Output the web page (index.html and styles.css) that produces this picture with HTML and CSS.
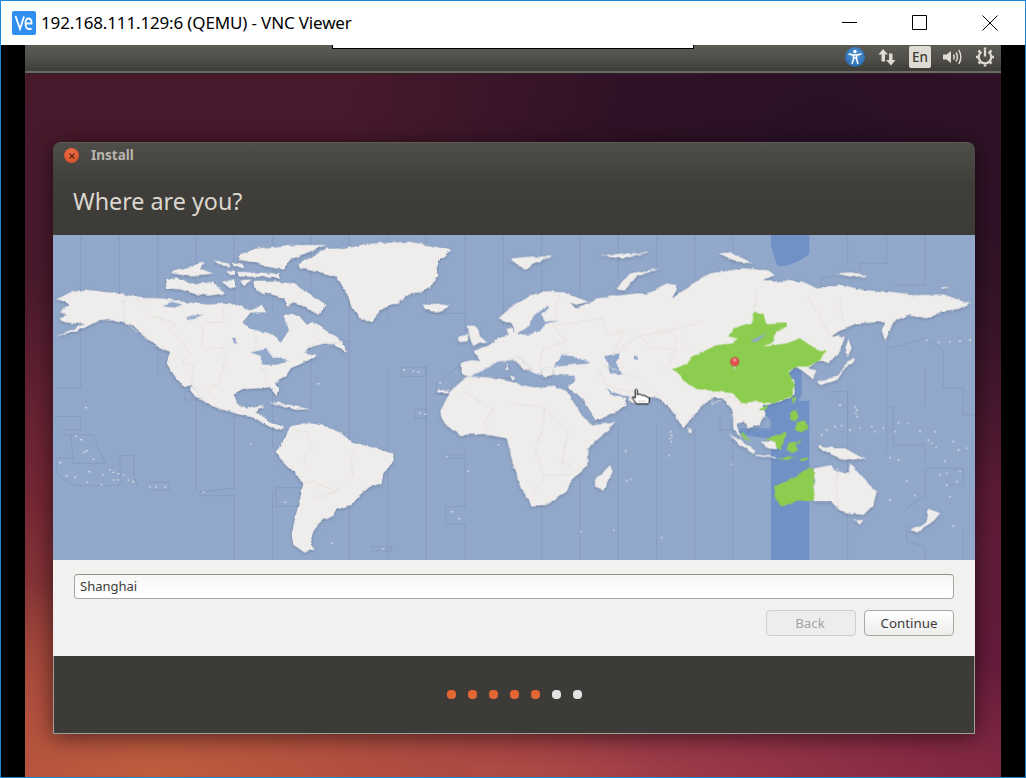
FILE: index.html
```html
<!DOCTYPE html>
<html lang="en">
<head>
<meta charset="utf-8">
<title>VNC Viewer</title>
<link rel="stylesheet" href="styles.css">
</head>
<body>
<div class="frame">
  <header class="titlebar">
    <svg class="vnc-logo" viewBox="0 0 24 24"><rect class="vnc-bg" width="24" height="24" rx="2"/><path class="vnc-mark" d="M3.500 5l4.500 13L12 5.500M13.500 12.500h6v-1q0-4-3-4t-3 5q0 5.500 3.500 5.500h2.500"/></svg>
    <span class="title-text">192.168.111.129:6 (QEMU) - VNC Viewer</span>
    <div class="win-controls">
      <svg class="win-btn" viewBox="0 0 16 16"><path class="win-stroke" d="M0 7.500h15"/></svg>
      <svg class="win-btn" viewBox="0 0 16 16"><path class="win-stroke" d="M.5.500h14v14h-14z"/></svg>
      <svg class="win-btn" viewBox="0 0 16 16"><path class="win-stroke" d="M.5.500l15 15M15.500.500l-15 15"/></svg>
    </div>
  </header>
  <div class="vnc-body">
    <div class="strip"></div>
    <main class="desktop">
      <div class="vnc-tab"></div>
      <div class="panel">
        <svg class="ico ico-a11y" viewBox="0 0 22 22">
          <defs><radialGradient id="a11y" cx=".5" cy=".4" r=".7"><stop offset="0" stop-color="#5b9bd8"/><stop offset="1" stop-color="#1f62a8"/></radialGradient></defs>
          <circle cx="11" cy="11" r="10" fill="url(#a11y)"/>
          <circle class="a-white" cx="11" cy="5.500" r="1.700"/>
          <path class="a-line" d="M4.500 8l4.500 1h4l4.500-1M9.500 9v4l-1.500 5M12.500 9v4l1.500 5M9.500 12h3"/>
        </svg>
        <svg class="ico ico-arrows" viewBox="0 0 18 18"><path class="p-fill" d="M5 1l5 5.500H7v7H3.500v-7H.5zM13 17.500l-5-5.500h3V5.500h3.500V12h3z"/></svg>
        <span class="en">En</span>
        <svg class="ico ico-vol" viewBox="0 0 22 18"><path class="p-fill" d="M1 6.500h3.500L9 3v12l-4.500-3.500H1z"/><path class="p-line" d="M11.500 6.500q1.500 2.500 0 5M14 4.500q2.800 4.500 0 9M16.800 2q4 7 0 14"/></svg>
        <svg class="ico ico-gear" viewBox="0 0 20 20"><path class="p-thick" d="M6.500 4.800a6.300 6.300 0 1 0 7 0M10 2.500v7"/><path class="p-line2" d="M10 .5v2M10 17.500v2M1 10H3M17 10h2M3.500 3.500l1.500 1.500M16.500 3.500L15 5M3.500 16.500L5 15M16.500 16.500L15 15"/></svg>
      </div>
      <section class="workspace">
        <div class="window">
          <div class="window-head">
            <div class="window-title">
              <span class="close"><svg class="close-x" viewBox="0 0 8 8"><path d="M1.500 1.500l5 5M6.500 1.500l-5 5"/></svg></span>
              <span class="install">Install</span>
            </div>
            <h1 class="heading">Where are you?</h1>
          </div>
          <svg class="map" viewBox="9 0 2766 975" aria-label="World time zone map">
            <defs>
              <filter id="coast" x="-5%" y="-5%" width="110%" height="110%" color-interpolation-filters="sRGB">
                <feTurbulence type="fractalNoise" baseFrequency=".04" numOctaves="3" seed="4" result="n"/>
                <feDisplacementMap in="SourceGraphic" in2="n" scale="11" xChannelSelector="R" yChannelSelector="G" result="d"/>
                <feGaussianBlur in="d" stdDeviation="1.800" result="b"/>
                <feGaussianBlur in="d" stdDeviation="5"/>
                <feOffset dy="3" dx="1" result="sb"/>
                <feFlood flood-color="#4a5a78" flood-opacity=".5"/>
                <feComposite in2="sb" operator="in" result="s"/>
                <feMerge><feMergeNode in="s"/><feMergeNode in="b"/></feMerge>
              </filter>
              <filter id="rough" x="-5%" y="-5%" width="110%" height="110%" color-interpolation-filters="sRGB">
                <feTurbulence type="fractalNoise" baseFrequency=".04" numOctaves="3" seed="4" result="n"/>
                <feDisplacementMap in="SourceGraphic" in2="n" scale="11" xChannelSelector="R" yChannelSelector="G"/>
                <feGaussianBlur stdDeviation="1.800"/>
              </filter>
              <filter id="soft"><feGaussianBlur stdDeviation="1.200"/></filter>
            </defs>
            <rect class="sea" x="0" y="0" width="2800" height="975"/>
            <g transform="translate(1380 0)">
              <path class="band" d="M783 0H898V58Q870 80 830 92H802Q790 60 783 30ZM835 400H875V480L865 497H898V975H783V612L700 600 670 590V580H783V560L750 510 790 470Z"/>
            </g>
            <path class="tz" d="M92 0V460H10M208 0V260M323 0V420M438 0V770M552 0V760L450 770V782H552V975M668 0V640M668 770V975M783 0V240M783 380V520M897 0V320H870M897 320V975M1013 0V260M1013 400V975M1128 0V235H1245V0M1128 395V975M1245 235V290M1245 640V660H1190V670H1245V815H1187V868H1245V975M1360 0V270M10 545H92V585H42V600H130L165 685H70L62 600M20 670H60M20 670V720L75 752H210V662H252V725L262 752M297 742H358V765H297M405 470H440V495H405ZM678 758H752V815H678ZM1055 397H1128V425H1055ZM1230 390L1160 445V478H1200M1095 522H1128V550H1095ZM968 935H1025V948H968Z"/>
            <g transform="translate(1380 0)">
              <path class="tz" d="M95 0V175M210 0V175M325 0V130M440 0V100M555 0V130M668 0V100M1013 0V80M1130 0V85H1050V110L935 130V180M1245 0V150H1150M95 640V975M210 640V975M325 560V975M440 570V975M555 580V975M668 600V975M1013 460V975M965 470H1013V600M1130 340L1180 330 1245 310 1300 345V460H1360V540H1395M1130 650V515H1150V630H1245M1245 630V680M1190 870V920L1245 935V975M1360 880V975M1190 820L1245 780V700H1360V750H1315M630 550V585H780V550M1245 400V515M1130 340V515"/>
            </g>
            <g class="land">
              <!-- North America -->
              <path d="M15 305L60 285 105 268 75 266 45 262 28 250 50 240 30 228 62 210 22 192 60 172 105 163 180 172 220 177 262 188 340 190 400 200 470 208 520 206 560 208 600 226 635 212 650 232 600 235 578 262 600 280 640 285 670 298 692 322 715 288 700 268 705 240 745 240 770 268 790 258 825 285 850 300 875 320 895 352 860 335 825 325 770 340 775 352 800 357 790 372 760 380 722 400 710 420 675 445 685 460 680 482 660 460 620 460 575 463 553 480 560 505 590 520 610 515 630 510 620 535 640 545 660 560 690 570 705 575 685 584 650 570 610 548 575 540 520 525 490 515 460 498 440 470 425 450 405 460 375 425 350 385 360 350 330 340 290 310 250 272 210 258 150 255 100 280Z"/>
              <path d="M425 452L445 475 460 497 440 490 420 465Z"/>
              <!-- Greenland, Iceland -->
              <path d="M745 88L790 62 830 40 880 42 950 26 1080 20 1130 30 1205 45 1170 72 1160 100 1162 125 1140 160 1110 172 1080 175 1060 195 1000 220 965 260 930 250 905 215 895 185 875 150 860 125 800 110 750 100Z"/>
              <path d="M1118 210L1160 205 1198 212 1180 228 1155 233 1125 222Z"/>
              <!-- South America -->
              <path d="M680 650L705 610 720 575 750 565 790 565 830 575 870 590 910 622 960 635 1030 655 1030 680 1000 715 995 745 960 755 930 780 905 810 860 820 850 840 815 855 790 890 780 925 795 945 760 950 730 930 725 900 735 850 750 790 760 745 730 710 690 670Z"/>
              <path d="M655 500L700 505 745 515 780 522 740 525 700 515ZM610 515L640 510 640 520Z"/>
              <g transform="translate(300 15)">
                <path d="M265 45L320 25 420 15 530 15 480 35 420 60 400 90 350 80 320 70 270 60ZM385 125L430 130 470 155 530 195 505 225 470 205 440 195 400 175 355 160 320 150 340 125ZM45 120L80 112 120 130 170 128 190 125 225 160 175 168 130 160 90 148 50 145ZM65 95L110 85 145 70 165 68 150 85 190 100 120 110 70 100ZM190 60L240 72 240 80 205 75ZM265 95L390 100 390 112 270 110ZM215 125L250 118 260 140 240 145ZM270 120L305 118 280 140ZM310 125L340 125 345 165 315 150ZM230 90L255 92 255 105 235 105ZM248 68L280 75 285 85 250 78ZM405 175L430 180 415 205Z"/>
              </g>
              <!-- Eurasia west -->
              <g transform="translate(1140 60)">
                <path d="M95 322L125 315 150 318 130 288 175 272 205 250 235 240 225 222 245 218 255 232 245 205 205 190 250 150 300 120 350 108 400 112 475 140 440 150 420 142 440 162 470 158 500 130 540 125 650 115 720 90V300L450 340 435 365 370 360 120 368 95 355Z"/>
              </g>
              <!-- Asia -->
              <g transform="translate(1380 0)">
                <path d="M230 205L300 185 380 175 420 178 440 160 470 145 500 150 490 190 540 150 600 115 700 100 770 105 795 120 760 135 880 140 920 160 1000 150 1060 165 1140 170 1220 180 1300 178 1380 205 1345 222 1300 228 1250 250 1190 240 1150 262 1125 320 1115 285 1125 262 1100 262 1040 265 985 290 965 305 1005 305 990 350 955 385 925 375 895 400 915 405 915 430 905 432 890 415 855 395 830 415 855 445 850 480 810 500 755 510 765 540 745 570 715 580 700 560 680 570 695 610 670 580 668 530 640 490 605 490 570 520 520 580 480 520 445 490 410 485 370 505 345 490 350 510 320 530 258 558 220 495 175 460 180 230Z"/>
              </g>
            </g>
            <!-- inland seas -->
            <g class="water">
              <path d="M578 262L610 232 648 234 700 240 715 285 692 322 670 298 600 280ZM343 210L365 200 398 208 375 218 350 215ZM408 250L440 240 460 238 430 252 412 255ZM542 308L552 308 562 328 550 322ZM600 352L650 342 670 365 716 375 690 388 660 390 635 388 635 362ZM765 350L810 332 860 325 810 352 775 360Z"/>
              <g transform="translate(1140 60)">
                <path d="M120 366L160 345 200 320 250 315 290 345 330 360 360 360 435 362 430 385 370 390 310 395 245 375 240 367ZM375 335L395 300 440 305 480 325 430 330ZM525 300L570 295 560 320 578 358 540 355ZM530 400L570 420 600 428 612 420 590 433 545 420ZM420 405L440 420 500 495 490 497 445 450ZM262 235L295 215 305 190 350 152 356 160 335 178 345 200 385 197 345 210 330 228 300 238 265 240ZM612 303L622 303 622 313 612 313Z"/>
              </g>
              <g transform="translate(1380 0)"><path d="M150 650L158 645 175 625 185 635 165 640 160 670 150 665Z"/></g>
            </g>
            <g class="land">
              <!-- Africa and islands -->
              <g transform="translate(1380 0)">
                <path d="M-210 530L-180 470-130 425-60 428 0 440 70 458 130 452 170 468 215 540 245 572 315 562 270 608 232 640 232 690 190 730 170 770 110 810 65 812 40 770 15 710 0 650-10 610-80 597-150 600-200 565Z"/>
                <path d="M255 735L300 690 308 710 280 765 255 755ZM535 578L550 585 545 592 535 590ZM1015 310L1025 340 1010 370 1005 345ZM920 440L985 420 1010 385 1030 365 1035 375 1005 400 985 430 935 450ZM912 700L960 690 980 710 1015 712 1020 685 1060 730 1100 770 1090 810 1060 840 1020 835 985 825 960 800 912 800ZM1030 855L1060 855 1048 872ZM1200 885L1250 860 1255 820 1290 835 1270 860 1220 890ZM5 70L60 65 130 65 70 85 45 105 20 85ZM320 160L360 115 450 100 380 125 345 165ZM625 55L660 52 730 85 680 80ZM970 115L1030 112 1075 125 1020 125ZM1295 160L1320 158 1300 165ZM270 60L350 55 420 52 340 68Z"/>
              </g>
              <g transform="translate(1140 60)">
                <path d="M110 212L135 212 150 240 172 262 130 270 120 250ZM85 245L115 238 112 260 88 262ZM255 305L275 315 305 340 285 345 255 315ZM228 320L236 345 226 345ZM240 362L258 368 248 378ZM335 340L370 340 370 360 340 365ZM22 405L55 405 55 412 22 412Z"/>
              </g>
              <g transform="translate(2010 435)">
                <path d="M25 160L60 180 105 215 100 222 60 195ZM105 222L170 232 165 236 110 228ZM125 185L175 185 170 208 140 205ZM298 195L345 205 375 205 440 240 405 235 370 240 340 225 300 205Z"/>
              </g>
            </g>
            <path class="dots" d="M108 518h0M78 603h0M93 614h0M110 647h0M103 652h0M131 673h0M30 683h0M118 710h0M50 722h0M75 727h0M112 742h0M155 750h0M160 720h0M180 705h0M190 712h0M205 716h0M222 720h0M235 735h0M250 740h0M190 735h0M205 735h0M300 756h0M318 756h0M345 756h0M461 772h0M602 627h0M705 802h0M845 925h0M1000 942h0M1062 404h0M1090 408h0M1105 412h0M1110 535h0M1125 538h0M1190 666h0M1255 709h0M1207 830h0M1228 851h0M805 446h0M1345 630h0M1165 470h0M1195 465h0M1170 443h0"/>
            <g transform="translate(1380 0)">
              <path class="dots" d="M482 590h0M485 600h0M481 610h0M484 620h0M347 648h0M477 662h0M665 688h0M350 737h0M362 733h0M212 890h0M312 886h0M455 908h0M1035 515h0M1040 525h0M1037 535h0M1042 545h0M990 510h0M935 600h0M950 585h0M975 575h0M995 572h0M1020 585h0M1050 580h0M1085 575h0M1095 590h0M1120 578h0M1155 590h0M1165 563h0M1195 565h0M1230 588h0M1275 590h0M1255 615h0M1265 625h0M1278 637h0M1140 668h0M1165 675h0M1305 678h0M1330 620h0M1345 645h0M1370 640h0M1290 720h0M1310 715h0M1350 710h0M1340 740h0M1310 750h0M1190 738h0M1215 782h0M1320 785h0M1140 795h0M1330 873h0M1250 315h0M1285 322h0M1320 320h0M1350 318h0M1380 315h0"/>
            </g>
            <g class="border">
              <path d="M222 178V260L290 310M255 190L300 240 375 265 360 285 400 320 420 360 395 380 428 392V445L460 470M458 262H520V205M458 262V340H520L530 370 500 450 470 455 495 495M615 285V345M630 395L650 430 648 460M790 300L815 325 880 320M730 590L770 590 785 640 765 670 772 710M790 790L860 770 875 750 910 720 900 660 925 630M760 745L790 740 860 770M1240 470L1330 525 1305 560 1310 590"/>
            </g>
            <g transform="translate(1380 0)">
              <g class="border">
                <path d="M130 270L170 320 100 340 85 400M150 180L130 270 280 250 290 300 340 290 310 360 390 300 480 290 545 360M280 390L390 430 445 480M390 300L420 340 500 340 480 390 450 400M260 400L290 450 390 480M580 260L500 280 430 290M740 170L730 235M895 185L940 265 965 305M990 190L1000 260M0 500L105 520 95 590 75 640 100 720 70 780M105 520L175 590 155 680 190 700M100 720H180M980 700V820M600 470L610 505 660 480 700 520"/>
              </g>
              <g class="green">
                <path d="M487 403L535 385 545 365 620 330 670 325 680 310 658 305 670 280 725 262 735 230 760 235 768 265 830 262 830 275 800 290 790 320 760 335 830 325 870 310 900 330 920 345 950 345 930 375 895 395 860 395 835 410 855 450 845 485 790 505 730 500 690 505 670 475 625 470 560 462 525 440 510 420Z"/>
              </g>
              <path class="water" d="M720 320L765 295 745 322Z"/>
              <g transform="translate(630 435)" class="green">
                <path d="M60 155L75 165 90 185 70 175ZM210 95L228 90 232 115 225 125 212 115ZM230 130L255 120 262 145 245 158 225 150ZM135 180L165 165 200 155 195 175 180 210 170 205 165 185ZM205 190L225 185 250 180 225 195 235 210 220 220 200 215ZM170 235L200 232 230 235 200 240ZM238 237L265 232 260 240 242 243ZM120 85L143 72 140 85 125 92ZM212 55L228 50 220 70ZM162 320L220 295 260 265 282 270V360L235 362 185 380 170 360Z"/>
              </g>
              <!-- pin -->
              <path class="pin-stem" d="M674 385V402"/>
              <circle class="pin" cx="674" cy="380" r="13"/>
              <circle class="pin-hi" cx="674" cy="375" r="5"/>
            </g>
            <g transform="translate(1710 435)">
              <path class="hand" d="M45 30Q48 24 52 30V44L60 42 66 46 74 46 80 50 88 54V66L84 72H50L38 56V50L46 54Z"/>
              <path class="hand-dots" d="M56 64H78"/>
            </g>
          </svg>
          <div class="form">
            <input class="city" type="text" value="Shanghai" readonly>
            <div class="actions">
              <button class="btn btn-off" type="button">Back</button>
              <button class="btn" type="button">Continue</button>
            </div>
          </div>
          <div class="footer">
            <i class="dot on"></i><i class="dot on"></i><i class="dot on"></i><i class="dot on"></i><i class="dot on"></i><i class="dot"></i><i class="dot"></i>
          </div>
        </div>
      </section>
    </main>
    <div class="strip"></div>
  </div>
</div>
</body>
</html>
```

FILE: styles.css
```css
* { box-sizing: border-box; }
html, body { margin: 0; padding: 0; }
body { width: 1026px; height: 778px; overflow: hidden; background: #000; }
.frame { width: 1026px; height: 778px; border: 1px solid #1c86d8; display: flex; flex-direction: column; background: #000; }
.titlebar { height: 44px; background: #fff; display: flex; align-items: center; padding-left: 11px; flex: none; }
.vnc-logo { width: 24px; height: 24px; margin-top: -1px; flex: none; }
.vnc-bg { fill: #2f8ff0; }
.vnc-mark { fill: none; stroke: #fff; stroke-width: 1.800; }
.title-text { font: 17px/1 "Noto Sans", sans-serif; letter-spacing: -.15px; color: #000; margin: -1px 0 0 5px; white-space: nowrap; }
.win-controls { margin-left: auto; display: flex; align-items: center; gap: 54px; padding-right: 27px; }
.win-btn { width: 16px; height: 16px; display: block; }
.win-stroke { fill: none; stroke: #000; stroke-width: 1; }
.vnc-body { flex: 1; display: flex; min-height: 0; }
.strip { width: 24px; background: #000; flex: none; }
.desktop { flex: 1; position: relative; display: flex; flex-direction: column; min-width: 0;
  background:
    radial-gradient(ellipse 480px 380px at 800px 90px, rgba(40,16,38,.95) 0%, rgba(42,16,38,.8) 45%, rgba(42,16,38,0) 100%),
    radial-gradient(ellipse 500px 200px at 130px 100%, #bd5d3e 0%, rgba(180,82,62,.9) 40%, rgba(160,65,60,0) 100%),
    radial-gradient(ellipse 700px 150px at 500px 100%, #a8454a 0%, rgba(150,50,70,.6) 60%, rgba(120,30,60,0) 100%),
    radial-gradient(ellipse 240px 500px at 0 100%, #a44e3a 0%, rgba(135,48,50,.6) 55%, rgba(110,40,40,0) 100%),
    linear-gradient(180deg, #47192b 0%, #4a1a2d 35%, #5e1b38 65%, #6a1c3e 100%);
}
.vnc-tab { position: absolute; z-index: 3; top: 0; left: 307px; width: 362px; height: 4px; background: #fff; border: 1px solid #000; border-top: 0; }
.panel { height: 28px; flex: none; position: relative; z-index: 2; display: flex; align-items: center; justify-content: flex-end; padding: 0 6px 3px 0; border-bottom: 2px solid #6a6962; background: linear-gradient(180deg, #5c5b55 0%, #504f4a 50%, #3e3d39 100%); box-shadow: 0 1px 0 #2b2226; }
.ico { display: block; flex: none; }
.ico-a11y { width: 22px; height: 22px; margin-right: 12px; }
.a-white { fill: #fff; }
.a-line { fill: none; stroke: #fff; stroke-width: 1.500; }
.ico-arrows { width: 18px; height: 18px; margin-right: 13px; }
.p-fill { fill: #dfdbd2; }
.p-line { fill: none; stroke: #dfdbd2; stroke-width: 1.500; }
.en { width: 22px; height: 22px; border-radius: 2px; background: #dfdbd2; color: #3c3b37; font: 500 13.500px/22px "Noto Sans", sans-serif; text-align: center; margin-right: 11px; flex: none; }
.ico-vol { width: 22px; height: 18px; margin-right: 11px; }
.ico-gear { width: 20px; height: 20px; }
.p-thick { fill: none; stroke: #dfdbd2; stroke-width: 2.200; }
.p-line2 { fill: none; stroke: #dfdbd2; stroke-width: 2.500; }
.workspace { flex: 1; position: relative; z-index: 1; padding: 69px 26px 0 28px; min-height: 0; }
.window { width: 922px; height: 592px; display: flex; flex-direction: column; border-radius: 8px 8px 0 0; box-shadow: 0 3px 22px rgba(0,0,0,.55); overflow: hidden; }
.window-head { height: 93px; flex: none; background: linear-gradient(180deg, #4e4d48 0%, #3f3e3a 45%, #3c3b37 100%); border-top: 1px solid #5c5b55; }
.window-title { display: flex; align-items: center; height: 25px; padding-left: 11px; }
.close { width: 15px; height: 15px; border-radius: 50%; background: radial-gradient(circle at 50% 35%, #f0704a, #cf4a22); display: flex; align-items: center; justify-content: center; flex: none; }
.close-x { width: 8px; height: 8px; fill: none; stroke: #5a2413; stroke-width: 1.300; }
.install { font: 700 13.500px/1 "Noto Sans", sans-serif; color: #b8b6ae; margin-left: 12px; }
.heading { margin: 20px 0 0 20px; font: 400 23.300px/1.200 "Noto Sans", sans-serif; color: #dcd8cf; }
.map { width: 922px; height: 325px; display: block; flex: none; }
.sea { fill: #92a8ca; }
.band { fill: #7091c6; }
.tz { fill: none; stroke: #8299bd; stroke-width: 2.500; filter: url(#soft); }
.land { fill: #efedec; filter: url(#coast); }
.water { fill: #92a8ca; filter: url(#rough); }
.dots { fill: none; stroke: #efedec; stroke-width: 5; stroke-linecap: round; filter: url(#soft); }
.border { fill: none; stroke: #e1dedc; stroke-width: 2.500; filter: url(#rough); }
.green { fill: #8ccd4f; filter: url(#rough); }
.pin { fill: #e2504f; stroke: #b33a3a; stroke-width: 1.500; }
.pin-hi { fill: #f39a90; }
.pin-stem { stroke: #d8d8d8; stroke-width: 4; }
.hand { fill: #fff; stroke: #000; stroke-width: 3; stroke-linejoin: round; }
.hand-dots { stroke: #999; stroke-width: 3; stroke-dasharray: 4 3; }
.form { height: 96px; flex: none; background: #f2f1f0; padding: 14px 21px 0 21px; display: flex; flex-direction: column; }
.city { width: 100%; height: 25px; border: 1px solid #a8a7a4; border-top-color: #8f8e8b; border-radius: 4px; background: linear-gradient(180deg, #f6f6f5, #fff); padding: 0 5px 1px; font: 13px "Noto Sans", sans-serif; color: #3c3c3c; outline: 0; }
.actions { display: flex; justify-content: flex-end; gap: 8px; margin-top: 11px; }
.btn { width: 90px; height: 26px; border: 1px solid #a9a8a5; border-radius: 4px; background: linear-gradient(180deg, #fff, #eeedec); color: #3c3c3c; font: 13.300px/1 "Noto Sans", sans-serif; padding: 2px 0 0; }
.btn-off { border-color: #cfcecc; background: #eeeded; color: #a5a4a1; padding-right: 2px; }
.footer { flex: 1; background: #3c3b37; display: flex; align-items: center; justify-content: center; gap: 12px; border: 1px solid #a19f9b; border-top: 0; }
.dot { width: 9px; height: 9px; border-radius: 4px; background: #e3e3e3; filter: blur(.5px); display: block; }
.dot.on { background: linear-gradient(180deg, #e9622b, #dc6a3e); }
```
